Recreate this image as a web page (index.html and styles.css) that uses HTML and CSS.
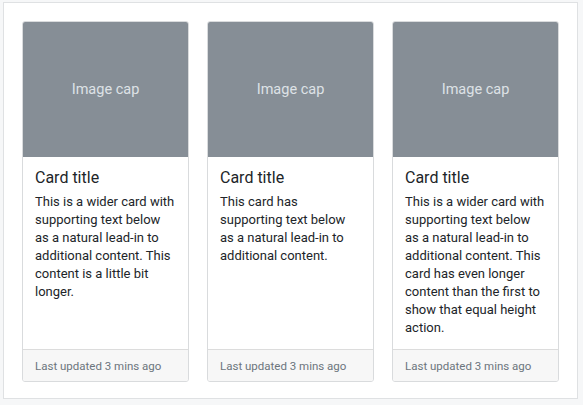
FILE: index.html
```html
<!DOCTYPE html>
<html lang="en">
<head>
<meta charset="utf-8">
<title>Card group</title>
<link rel="stylesheet" href="styles.css">
</head>
<body>
<div class="frame">
  <div class="card-group">
    <div class="card">
      <div class="card-img">Image cap</div>
      <div class="card-body">
        <h5 class="card-title">Card title</h5>
        <p class="card-text">This is a wider card with supporting text below as a natural lead-in to additional content. This content is a little bit longer.</p>
      </div>
      <div class="card-footer">Last updated 3 mins ago</div>
    </div>
    <div class="card">
      <div class="card-img">Image cap</div>
      <div class="card-body">
        <h5 class="card-title">Card title</h5>
        <p class="card-text">This card has supporting text below as a natural lead-in to additional content.</p>
      </div>
      <div class="card-footer">Last updated 3 mins ago</div>
    </div>
    <div class="card">
      <div class="card-img">Image cap</div>
      <div class="card-body">
        <h5 class="card-title">Card title</h5>
        <p class="card-text">This is a wider card with supporting text below as a natural lead-in to additional content. This card has even longer content than the first to show that equal height action.</p>
      </div>
      <div class="card-footer">Last updated 3 mins ago</div>
    </div>
  </div>
</div>
</body>
</html>
```

FILE: styles.css
```css
html {
  background: #f6f7f8;
}

body {
  margin: 0;
  height: 405px;
  font-family: "Roboto", "Noto Sans", sans-serif;
  color: #212529;
}

.frame {
  margin: 2px 5px 0 3px;
  height: 397px;
  box-sizing: border-box;
  padding: 18px;
  background: #fff;
  border: 1px solid #dfe1e3;
}

.card-group {
  display: flex;
  gap: 18px;
}

.card {
  width: 167px;
  height: 361px;
  box-sizing: border-box;
  display: flex;
  flex-direction: column;
  border: 1px solid #d9dbdd;
  border-radius: 3px;
  overflow: hidden;
  background: #fff;
}

.card-img {
  height: 135px;
  flex: none;
  display: flex;
  align-items: center;
  justify-content: center;
  background: #868e96;
  color: #dee2e6;
  font-size: 14.5px;
}

.card-body {
  flex: 1;
  padding: 10px 12px 12px;
}

.card-title {
  margin: 0 0 4px;
  font-size: 16px;
  font-weight: 400;
  line-height: 22px;
  color: #212529;
}

.card-text {
  margin: 0;
  font-size: 13px;
  line-height: 18px;
}

.card-footer {
  flex: none;
  height: 32px;
  box-sizing: border-box;
  display: flex;
  align-items: center;
  padding: 0 12px;
  background: #f7f7f7;
  border-top: 1px solid #dcdcdc;
  font-size: 11.5px;
  color: #6c757d;
}
```
